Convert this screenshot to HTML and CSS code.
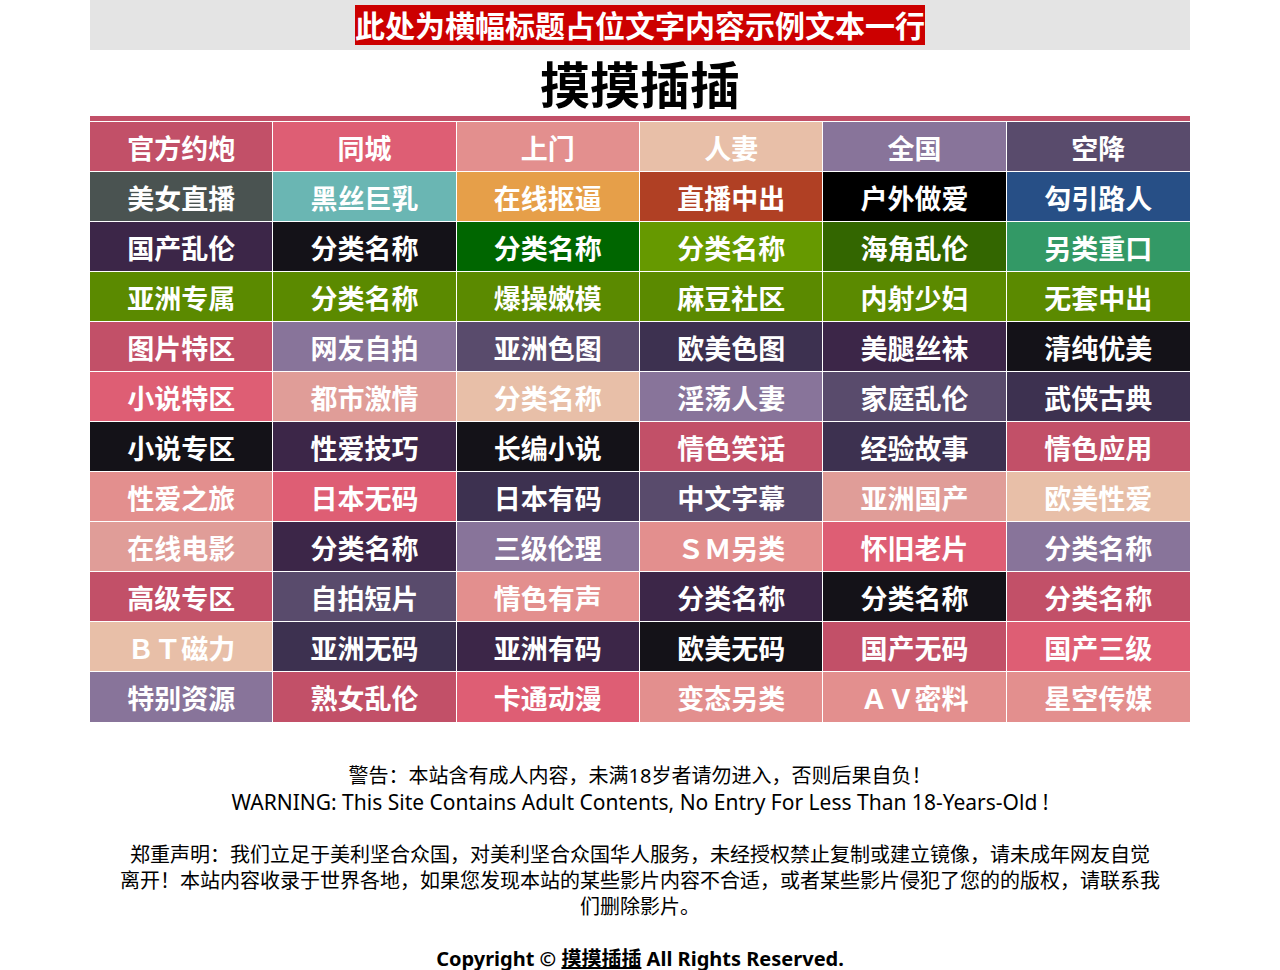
FILE: index.html
```
<!DOCTYPE html>
<html lang="zh-CN">
<head>
<meta charset="utf-8">
<meta name="viewport" content="width=device-width, initial-scale=1">
<title>摸摸插插</title>
<link rel="stylesheet" href="styles.css">
</head>
<body>
<div class="page">
<div class="banner"><a href="#" class="banner-link">此处为横幅标题占位文字内容示例文本一行</a></div>
<h1 class="title">摸摸插插</h1>
<nav class="grid">
<a href="#" class="rose">官方约炮</a><a href="#" class="pink">同城</a><a href="#" class="coral">上门</a><a href="#" class="sand">人妻</a><a href="#" class="lilac">全国</a><a href="#" class="plum">空降</a>
<a href="#" class="slate">美女直播</a><a href="#" class="teal">黑丝巨乳</a><a href="#" class="orange">在线抠逼</a><a href="#" class="rust">直播中出</a><a href="#" class="black">户外做爱</a><a href="#" class="blue">勾引路人</a>
<a href="#" class="grape">国产乱伦</a><a href="#" class="ink">分类名称</a><a href="#" class="green">分类名称</a><a href="#" class="lime">分类名称</a><a href="#" class="forest">海角乱伦</a><a href="#" class="jade">另类重口</a>
<a href="#" class="olive">亚洲专属</a><a href="#" class="olive">分类名称</a><a href="#" class="olive">爆操嫩模</a><a href="#" class="olive">麻豆社区</a><a href="#" class="olive">内射少妇</a><a href="#" class="olive">无套中出</a>
<a href="#" class="rose">图片特区</a><a href="#" class="lilac">网友自拍</a><a href="#" class="plum">亚洲色图</a><a href="#" class="indigo">欧美色图</a><a href="#" class="grape">美腿丝袜</a><a href="#" class="ink">清纯优美</a>
<a href="#" class="pink">小说特区</a><a href="#" class="blush">都市激情</a><a href="#" class="sand">分类名称</a><a href="#" class="lilac">淫荡人妻</a><a href="#" class="plum">家庭乱伦</a><a href="#" class="indigo">武侠古典</a>
<a href="#" class="ink">小说专区</a><a href="#" class="grape">性爱技巧</a><a href="#" class="ink">长编小说</a><a href="#" class="rose">情色笑话</a><a href="#" class="indigo">经验故事</a><a href="#" class="rose">情色应用</a>
<a href="#" class="coral">性爱之旅</a><a href="#" class="pink">日本无码</a><a href="#" class="indigo">日本有码</a><a href="#" class="plum">中文字幕</a><a href="#" class="blush">亚洲国产</a><a href="#" class="sand">欧美性爱</a>
<a href="#" class="blush">在线电影</a><a href="#" class="grape">分类名称</a><a href="#" class="lilac">三级伦理</a><a href="#" class="coral">ＳＭ另类</a><a href="#" class="pink">怀旧老片</a><a href="#" class="lilac">分类名称</a>
<a href="#" class="rose">高级专区</a><a href="#" class="plum">自拍短片</a><a href="#" class="coral">情色有声</a><a href="#" class="grape">分类名称</a><a href="#" class="ink">分类名称</a><a href="#" class="rose">分类名称</a>
<a href="#" class="sand">ＢＴ磁力</a><a href="#" class="indigo">亚洲无码</a><a href="#" class="grape">亚洲有码</a><a href="#" class="ink">欧美无码</a><a href="#" class="rose">国产无码</a><a href="#" class="pink">国产三级</a>
<a href="#" class="lilac">特别资源</a><a href="#" class="rose">熟女乱伦</a><a href="#" class="pink">卡通动漫</a><a href="#" class="coral">变态另类</a><a href="#" class="coral">ＡＶ密料</a><a href="#" class="coral">星空传媒</a>
</nav>
<footer class="footer">
<p>警告：本站含有成人内容，未满18岁者请勿进入，否则后果自负！<br><span class="warning" lang="en">WARNING: This Site Contains Adult Contents, No Entry For Less Than 18-Years-Old !</span></p>
<p>郑重声明：我们立足于美利坚合众国，对美利坚合众国华人服务，未经授权禁止复制或建立镜像，请未成年网友自觉<span class="keep">离开</span>！本站内容收录于世界各地，如果您发现本站的某些影片内容不合适，或者某些影片侵犯了您的的版权，请联系我们删除影片。</p>
<p class="copyright">Copyright © <a href="#">摸摸插插</a> All Rights Reserved.</p>
</footer>
</div>
</body>
</html>
```
FILE: styles.css
```
* { box-sizing: border-box; }
body { margin: 0; background: #fff; color: #000; font-family: "Noto Sans", "Noto Sans CJK SC", sans-serif; }
.page { max-width: 1100px; margin: 0 auto; }
.banner { background: #e4e4e4; text-align: center; padding: 5px 0; }
.banner-link { display: inline-block; vertical-align: top; background: #c00; color: #fff; font-size: 30px; line-height: 42px; height: 40px; font-weight: 700; text-decoration: none; }
.title { margin: 0; padding-top: 4px; font-size: 50px; line-height: 62px; text-align: center; border-bottom: 5px solid #c25068; }
.grid { display: grid; grid-template-columns: repeat(6, 1fr); padding-top: 1px; }
.grid a { border: solid #fff; border-width: 0 1px 1px 0; padding-top: 4px; color: #fff; font-size: 27px; line-height: 46px; min-height: 50px; font-weight: 700; text-align: center; text-decoration: none; white-space: nowrap; }
.grid a:nth-child(6n) { border-right: 0; }
.grid a:nth-last-child(-n+6) { border-bottom: 0; }
.grid a { height: 50px; }
.rose { background: #c25068; }
.pink { background: #de5e74; }
.coral { background: #e38f8e; }
.blush { background: #e09d98; }
.sand { background: #e8bfa8; }
.lilac { background: #88749a; }
.plum { background: #594b6c; }
.indigo { background: #3d3150; }
.grape { background: #3c2648; }
.ink { background: #141218; }
.slate { background: #4a5351; }
.teal { background: #6ab6b3; }
.orange { background: #e69f49; }
.rust { background: #b04024; }
.black { background: #000; }
.blue { background: #274f86; }
.green { background: #060; }
.lime { background: #690; }
.forest { background: #360; }
.jade { background: #396; }
.olive { background: #5b8a00; }
.footer { padding: 41px 30px 0; font-size: 20px; line-height: 26px; text-align: center; }
.footer p { margin: 0 0 26px; }
.footer .warning { font-size: 21px; }
.footer .keep { white-space: nowrap; }
.footer .copyright { margin: 0; font-weight: 700; }
.footer a { color: #000; }
```
